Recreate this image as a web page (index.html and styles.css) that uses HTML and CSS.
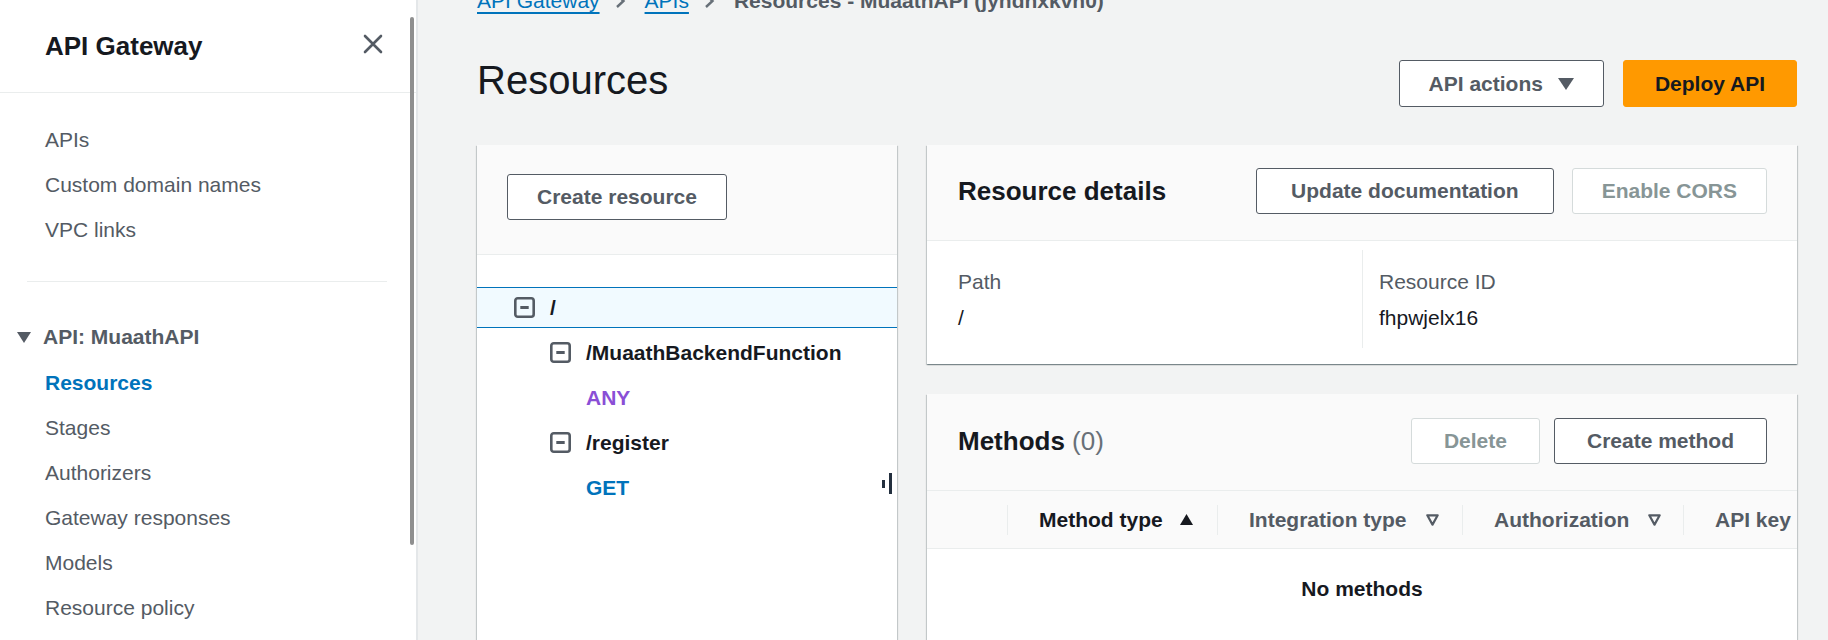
FILE: index.html
```html
<!DOCTYPE html>
<html lang="en">
<head>
<meta charset="utf-8">
<title>Resources - API Gateway</title>
<link rel="stylesheet" href="styles.css">
</head>
<body>
<div class="app">
  <nav class="sidebar">
    <div class="side-head">
      <span class="side-title">API Gateway</span>
      <span class="close-btn">
        <svg width="20" height="20" viewBox="0 0 20 20"><path d="M2 2 L18 18 M18 2 L2 18" stroke="#545b64" stroke-width="2.6" stroke-linecap="round" fill="none"/></svg>
      </span>
    </div>
    <ul class="side-list top-list">
      <li>APIs</li>
      <li>Custom domain names</li>
      <li>VPC links</li>
    </ul>
    <div class="side-div"></div>
    <div class="section-title">
      <svg width="14" height="11" viewBox="0 0 14 11"><polygon points="0,0 14,0 7,11" fill="#545b64"/></svg>
      <span>API: MuaathAPI</span>
    </div>
    <ul class="side-list">
      <li class="active">Resources</li>
      <li>Stages</li>
      <li>Authorizers</li>
      <li>Gateway responses</li>
      <li>Models</li>
      <li>Resource policy</li>
    </ul>
    <div class="scroll-thumb"></div>
  </nav>

  <main class="main">
    <div class="breadcrumb">
      <a class="crumb-link">API Gateway</a>
      <svg class="chev" width="11" height="14" viewBox="0 0 11 14"><path d="M2 1 L8.5 7 L2 13" stroke="#687078" stroke-width="2.4" fill="none"/></svg>
      <a class="crumb-link">APIs</a>
      <svg class="chev" width="11" height="14" viewBox="0 0 11 14"><path d="M2 1 L8.5 7 L2 13" stroke="#687078" stroke-width="2.4" fill="none"/></svg>
      <span class="crumb-current">Resources - MuaathAPI (jyndhxkvh0)</span>
    </div>

    <div class="title-row">
      <h1>Resources</h1>
      <div class="title-actions">
        <button class="btn btn-tall">API actions
          <svg class="caret" width="16" height="12" viewBox="0 0 16 12"><polygon points="0,0 16,0 8,12" fill="#545b64"/></svg>
        </button>
        <button class="btn btn-tall btn-primary">Deploy API</button>
      </div>
    </div>

    <div class="columns">
      <section class="panel tree-panel">
        <div class="tree-head">
          <button class="btn">Create resource</button>
        </div>
        <div class="tree-body">
          <div class="tree-row level-1 selected">
            <svg class="minus" width="21" height="21" viewBox="0 0 21 21"><rect x="1.3" y="1.3" width="18.4" height="18.4" rx="2.5" stroke="#545b64" stroke-width="2.6" fill="none"/><path d="M6.3 10.5 H14.7" stroke="#545b64" stroke-width="3"/></svg>
            <span class="res-name">/</span>
          </div>
          <div class="tree-row level-2">
            <svg class="minus" width="21" height="21" viewBox="0 0 21 21"><rect x="1.3" y="1.3" width="18.4" height="18.4" rx="2.5" stroke="#545b64" stroke-width="2.6" fill="none"/><path d="M6.3 10.5 H14.7" stroke="#545b64" stroke-width="3"/></svg>
            <span class="res-name">/MuaathBackendFunction</span>
          </div>
          <div class="tree-row level-3"><span class="method method-any">ANY</span></div>
          <div class="tree-row level-2">
            <svg class="minus" width="21" height="21" viewBox="0 0 21 21"><rect x="1.3" y="1.3" width="18.4" height="18.4" rx="2.5" stroke="#545b64" stroke-width="2.6" fill="none"/><path d="M6.3 10.5 H14.7" stroke="#545b64" stroke-width="3"/></svg>
            <span class="res-name">/register</span>
          </div>
          <div class="tree-row level-3"><span class="method method-get">GET</span></div>
        </div>
        <div class="resize-handle"><span class="bar-short"></span><span class="bar-long"></span></div>
      </section>

      <div class="right-col">
        <section class="panel">
          <div class="panel-head">
            <h2>Resource details</h2>
            <div class="head-actions">
              <button class="btn btn-wide">Update documentation</button>
              <button class="btn btn-disabled">Enable CORS</button>
            </div>
          </div>
          <div class="details-body">
            <div class="detail-col">
              <div class="detail-label">Path</div>
              <div class="detail-value">/</div>
            </div>
            <div class="detail-col second">
              <div class="detail-label">Resource ID</div>
              <div class="detail-value">fhpwjelx16</div>
            </div>
          </div>
        </section>

        <section class="panel methods-panel">
          <div class="panel-head methods-head">
            <h2>Methods <span class="count">(0)</span></h2>
            <div class="head-actions gap-sm">
              <button class="btn btn-disabled btn-mid">Delete</button>
              <button class="btn btn-mid">Create method</button>
            </div>
          </div>
          <div class="table-head">
            <div class="th th-select"></div>
            <div class="th th-method"><span class="sep"></span><span class="th-text active">Method type</span>
              <svg width="13" height="11" viewBox="0 0 13 11"><polygon points="0,11 6.5,0 13,11" fill="#16191f"/></svg>
            </div>
            <div class="th th-integration"><span class="sep"></span><span class="th-text">Integration type</span>
              <svg width="13" height="12" viewBox="0 0 13 12"><polygon points="1.3,1.3 11.7,1.3 6.5,10.6" fill="none" stroke="#545b64" stroke-width="2.2" stroke-linejoin="round"/></svg>
            </div>
            <div class="th th-auth"><span class="sep"></span><span class="th-text">Authorization</span>
              <svg width="13" height="12" viewBox="0 0 13 12"><polygon points="1.3,1.3 11.7,1.3 6.5,10.6" fill="none" stroke="#545b64" stroke-width="2.2" stroke-linejoin="round"/></svg>
            </div>
            <div class="th th-key"><span class="sep"></span><span class="th-text">API key</span></div>
          </div>
          <div class="empty-row">No methods</div>
        </section>
      </div>
    </div>
  </main>
</div>
</body>
</html>
```

FILE: styles.css
```css
* { box-sizing: border-box; }

html, body {
  margin: 0;
  height: 640px;
  overflow: hidden;
}

body {
  font-family: "Liberation Sans", Arial, Helvetica, sans-serif;
  font-size: 21px;
  line-height: 30px;
  color: #16191f;
  background: #f2f3f3;
}

.app {
  display: flex;
  height: 640px;
}

/* ---------- Sidebar ---------- */
.sidebar {
  width: 418px;
  flex: none;
  background: #ffffff;
  border-right: 2px solid #e4e7e9;
  position: relative;
  height: 640px;
  overflow: hidden;
}

.side-head {
  height: 93px;
  border-bottom: 1px solid #eaeded;
  display: flex;
  align-items: center;
  justify-content: space-between;
  padding: 0 33px 0 45px;
}

.side-title {
  font-size: 26px;
  font-weight: 700;
  color: #16191f;
}

.close-btn {
  display: flex;
  width: 20px;
  height: 20px;
  margin-top: -4px;
}

.side-list {
  list-style: none;
  margin: 0;
  padding: 0 0 0 45px;
}

.side-list li {
  padding: 7.5px 0;
  color: #545b64;
}

.top-list {
  padding-top: 24px;
}

.side-list li.active {
  color: #0073bb;
  font-weight: 700;
}

.side-div {
  height: 1px;
  background: #eaeded;
  margin: 29px 29px 0 27px;
}

.section-title {
  display: flex;
  align-items: center;
  gap: 12px;
  padding: 40px 0 8px 17px;
  font-weight: 700;
  color: #545b64;
}

.section-title svg {
  margin-top: 1px;
}

.scroll-thumb {
  position: absolute;
  left: 410px;
  top: 17px;
  width: 4px;
  height: 528px;
  background: #8f8f8f;
  border-radius: 2px;
}

/* ---------- Main ---------- */
.main {
  flex: 1;
  min-width: 0;
  padding: 0 31px 0 59px;
}

.breadcrumb {
  display: flex;
  align-items: center;
  height: 30px;
  margin-top: -14px;
  white-space: nowrap;
}

.crumb-link {
  color: #0073bb;
  text-decoration: underline;
  text-decoration-thickness: 2px;
  text-underline-offset: 4px;
}

.chev {
  margin: 0 19px 0 15px;
}

.crumb-current {
  color: #545b64;
  font-weight: 700;
  font-size: 21px;
}

.title-row {
  display: flex;
  justify-content: space-between;
  align-items: flex-start;
  margin-top: 40px;
}

h1 {
  margin: 0;
  font-size: 40px;
  line-height: 48px;
  font-weight: 400;
  color: #16191f;
}

.title-actions {
  display: flex;
  gap: 19px;
  margin-top: 4px;
}

/* ---------- Buttons ---------- */
.btn {
  font-family: inherit;
  font-size: 21px;
  font-weight: 700;
  line-height: 30px;
  height: 46px;
  padding: 0 29px;
  background: #ffffff;
  color: #545b64;
  border: 1px solid #545b64;
  border-radius: 3px;
  display: inline-flex;
  align-items: center;
  white-space: nowrap;
}

.btn-wide {
  padding: 0 34px;
}

.btn-mid {
  padding: 0 32px;
}

.btn-tall {
  height: 47px;
}

.caret {
  margin-left: 15px;
}

.btn-primary {
  background: #ff9900;
  border-color: #ff9900;
  color: #16191f;
  padding: 0 31px;
}

.btn-disabled {
  color: #879596;
  border-color: #d5dbdb;
}

/* ---------- Layout columns ---------- */
.columns {
  display: grid;
  grid-template-columns: 420px 1fr;
  gap: 30px;
  margin-top: 38px;
}

.panel {
  background: #ffffff;
  box-shadow: 0 1px 1px 0 rgba(0, 28, 36, 0.3),
              1px 1px 1px 0 rgba(0, 28, 36, 0.15),
              -1px 1px 1px 0 rgba(0, 28, 36, 0.15);
}

/* ---------- Tree panel ---------- */
.tree-panel {
  position: relative;
  height: 560px;
}

.tree-head {
  background: #fafafa;
  padding: 29px 30px 34px;
  border-bottom: 1px solid #eaeded;
}

.tree-body {
  padding-top: 30px;
}

.tree-row {
  height: 45px;
  display: flex;
  align-items: center;
  gap: 15px;
}

.tree-row.selected {
  height: 41px;
  margin: 2px 0;
  background: #f1faff;
  border-top: 1px solid #0073bb;
  border-bottom: 1px solid #0073bb;
}

.level-1 { padding-left: 37px; }
.level-2 { padding-left: 73px; }
.level-3 { padding-left: 109px; }

.minus {
  flex: none;
}

.res-name {
  font-weight: 700;
  color: #16191f;
}

.method {
  font-weight: 700;
}

.method-any { color: #8a4fd6; }
.method-get { color: #0073bb; }

.resize-handle {
  position: absolute;
  left: 405px;
  top: 328px;
  width: 10px;
  height: 21px;
}

.bar-short {
  position: absolute;
  left: 0;
  top: 7px;
  width: 3px;
  height: 8px;
  background: #232f3e;
}

.bar-long {
  position: absolute;
  left: 7px;
  top: 0;
  width: 3px;
  height: 21px;
  background: #232f3e;
}

/* ---------- Right column ---------- */
.right-col {
  display: flex;
  flex-direction: column;
  gap: 30px;
}

.panel-head {
  background: #fafafa;
  display: flex;
  justify-content: space-between;
  align-items: center;
  padding: 23px 30px 26px 31px;
  border-bottom: 1px solid #eaeded;
}

h2 {
  margin: 0;
  font-size: 26px;
  line-height: 30px;
  font-weight: 700;
  color: #16191f;
}

.count {
  font-weight: 400;
  color: #687078;
}

.head-actions {
  display: flex;
  gap: 18px;
}

.head-actions.gap-sm {
  gap: 14px;
}

.details-body {
  display: grid;
  grid-template-columns: 1fr 1fr;
  padding: 9px 31px 16px;
}

.detail-col {
  padding: 17px 16px 15px 0;
}

.detail-col.second {
  border-left: 1px solid #eaeded;
  padding-left: 16px;
}

.detail-label {
  color: #545b64;
}

.detail-value {
  margin-top: 6px;
  color: #16191f;
}

/* ---------- Methods table ---------- */
.methods-panel {
  height: 300px;
}

.methods-head {
  padding: 24px 30px 26px 31px;
}

.table-head {
  display: flex;
  align-items: center;
  height: 58px;
  background: #fafafa;
  border-bottom: 1px solid #eaeded;
  overflow: hidden;
  white-space: nowrap;
}

.th {
  display: flex;
  align-items: center;
  height: 30px;
  font-weight: 700;
  color: #545b64;
  flex: none;
}

.sep {
  width: 1px;
  height: 30px;
  background: #eaeded;
  margin-right: 31px;
  flex: none;
}

.th-select { width: 80px; }
.th-method { width: 210px; }
.th-integration { width: 245px; }
.th-auth { width: 221px; }
.th-key { flex: 1; }

.th-text.active {
  color: #16191f;
}

.th-method svg { margin-left: 17px; }
.th-integration svg { margin-left: 19px; }
.th-auth svg { margin-left: 19px; }

.empty-row {
  text-align: center;
  font-weight: 700;
  color: #16191f;
  padding-top: 25px;
}
```
